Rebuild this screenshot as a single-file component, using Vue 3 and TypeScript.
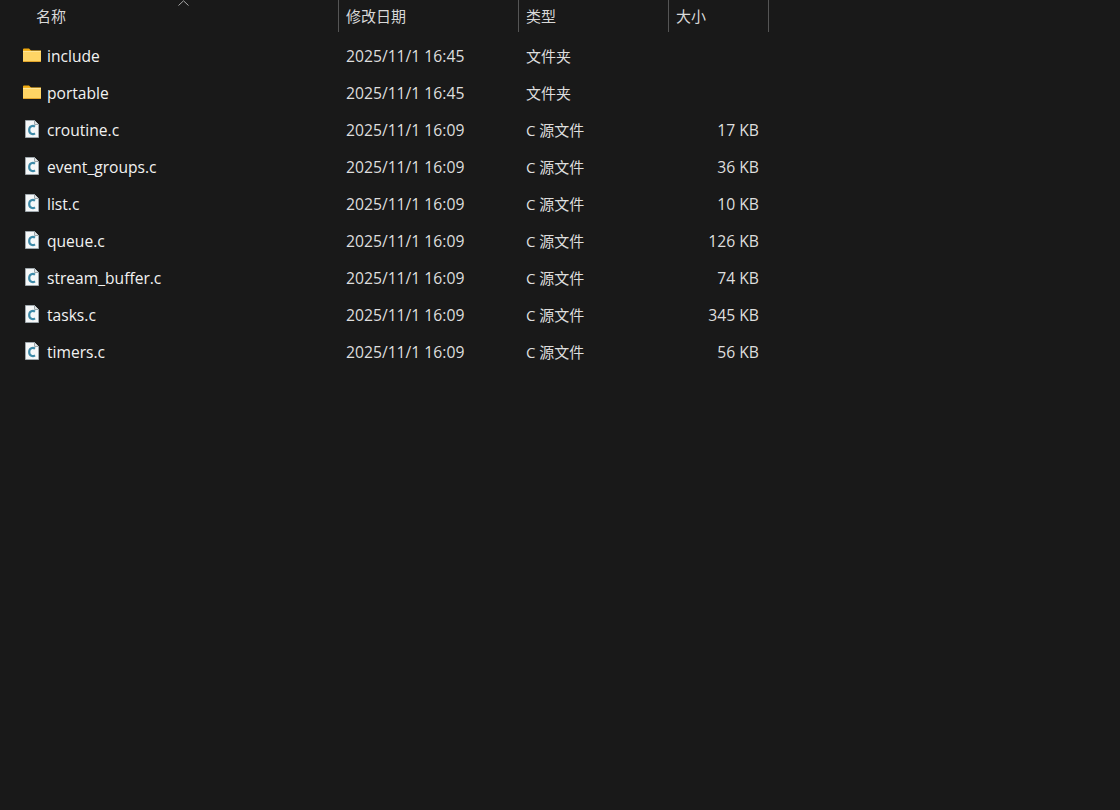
<script setup lang="ts">
interface Row { name: string; date: string; type: string; size: string; folder: boolean }
const file = (name: string, size: string): Row => ({ name, date: '2025/11/1 16:09', type: 'C 源文件', size, folder: false })
const folder = (name: string): Row => ({ name, date: '2025/11/1 16:45', type: '文件夹', size: '', folder: true })
const rows: Row[] = [
  folder('include'), folder('portable'),
  file('croutine.c', '17 KB'), file('event_groups.c', '36 KB'), file('list.c', '10 KB'),
  file('queue.c', '126 KB'), file('stream_buffer.c', '74 KB'), file('tasks.c', '345 KB'), file('timers.c', '56 KB'),
]
</script>

<template>
  <div class="page">
    <div class="head">
      <div class="hcell hname">名称
        <svg class="sort" width="11" height="6" viewBox="0 0 11 6"><path d="M0.5 5.5 L5.5 0.8 L10.5 5.5" fill="none" stroke="#a8a8a8" stroke-width="1"/></svg>
      </div>
      <div class="hcell hdate">修改日期</div>
      <div class="hcell htype">类型</div>
      <div class="hcell hsize">大小</div>
    </div>
    <div class="list">
      <div v-for="r in rows" :key="r.name" class="row">
        <div class="name">
          <div class="iconbox">
            <svg v-if="r.folder" class="dicon" width="18" height="14" viewBox="0 0 18 14">
              <path d="M0 1.5 Q0 0.5 1 0.5 H6 L8 2.5 H18 V5 H0 Z" fill="#f0a90e"/>
              <rect x="0" y="2.8" width="18" height="11.2" fill="#ffd565"/>
              <rect x="0" y="3" width="18" height="1" fill="#ffe596"/>
              <rect x="0" y="13" width="18" height="1" fill="#e2a52c"/>
            </svg>
            <svg v-else class="ficon" width="14" height="18" viewBox="0 0 14 18">
              <path d="M0.5 0.5 H9.5 L13.5 4.5 V17.5 H0.5 Z" fill="#f6f8f9" stroke="#9fa8ad"/>
              <path d="M9.5 0.5 V4.5 H13.5" fill="#dfe3e5" stroke="#9fa8ad"/>
              <path d="M10 6.6 C8 5.2 4.2 5.8 4.2 10 C4.2 14.2 8 14.8 10 13.4" fill="none" stroke="#3e8aa8" stroke-width="2.2"/>
            </svg>
          </div>
          <span class="label">{{ r.name }}</span>
        </div>
        <div class="date">{{ r.date }}</div>
        <div class="type">{{ r.type }}</div>
        <div class="size">{{ r.size }}</div>
      </div>
    </div>
  </div>
</template>

<style>
html, body { margin: 0; background: #191919; }
</style>

<style scoped>
.page {
  width: 1120px;
  height: 810px;
  background: #191919;
  color: #dedede;
  font-family: "Open Sans", "Noto Sans CJK SC", sans-serif;
  font-size: 15.7px;
  overflow: hidden;
}
.head { display: flex; height: 32px; }
.hcell {
  box-sizing: border-box;
  border-right: 1px solid #555;
  padding-left: 7px;
  line-height: 32px;
  font-family: "Noto Sans CJK SC", sans-serif;
  font-size: 15px;
  color: #d8d8d8;
}
.hname { width: 339px; padding-left: 36px; position: relative; }
.hdate { width: 180px; }
.htype { width: 150px; }
.hsize { width: 100px; }
.sort { position: absolute; left: 178px; top: 0; }
.list { padding-top: 6px; }
.row { display: flex; height: 37px; align-items: center; box-sizing: border-box; padding-bottom: 2px; }
.name { width: 339px; display: flex; align-items: center; box-sizing: border-box; padding-left: 23px; color: #f2f2f2; font-size: 15.6px; }
.label { padding-top: 1px; }
.iconbox { width: 24px; height: 18px; display: flex; align-items: center; flex: none; }
.dicon { margin-top: -2px; }
.ficon { margin-left: 2px; margin-top: -1px; }
.date { width: 180px; padding-left: 7px; box-sizing: border-box; }
.type { width: 150px; padding-left: 7px; box-sizing: border-box; font-size: 15px; }
.size { width: 100px; box-sizing: border-box; padding-right: 10px; text-align: right; }
</style>
